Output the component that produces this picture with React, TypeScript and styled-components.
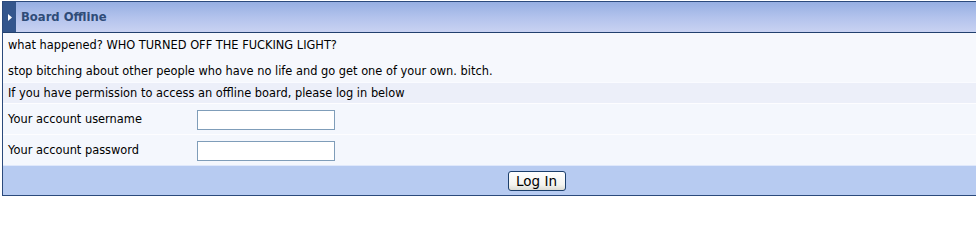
import React from 'react';
import styled, { createGlobalStyle } from 'styled-components';

const GlobalStyle = createGlobalStyle`
  html, body {
    margin: 0;
    padding: 0;
    background: #ffffff;
    overflow: hidden;
  }
  body {
    padding: 1px 0 0 2px;
    font-family: 'DejaVu Sans', Verdana, sans-serif;
  }
`;

const Board = styled.div`
  width: 1067px;
  border: 1px solid #2b4a7c;
  border-right: none;
`;

const Header = styled.div`
  display: flex;
  align-items: stretch;
  height: 30px;
  background: linear-gradient(to bottom, #96afe2 0%, #b2c2ec 50%, #c9d2f2 100%);
  border-bottom: 1px solid #22406e;
`;

const Marker = styled.div`
  width: 13px;
  background: #34568c;
  display: flex;
  align-items: center;
  justify-content: center;
`;

const Title = styled.h2`
  margin: 0;
  padding-left: 5px;
  display: flex;
  align-items: center;
  font-size: 11.6px;
  font-weight: bold;
  color: #2f4c78;
`;

const Message = styled.div`
  padding: 6px 5px 4px 5px;
  background: #f6f8fd;
  font-size: 11.4px;
  line-height: 13px;
  color: #000;
`;

const Line = styled.p<{ $gap?: boolean }>`
  margin: ${p => (p.$gap ? '13px 0 0' : '0')};
`;

const Notice = styled.div`
  height: 20px;
  padding: 0 5px;
  display: flex;
  align-items: center;
  background: #eceff9;
  border-top: 1px solid #fafbff;
  font-size: 11.4px;
  color: #000;
`;

const FieldRow = styled.div`
  display: grid;
  grid-template-columns: 194px 1fr;
  align-items: center;
  height: 30px;
  background: #f4f7fd;
  border-top: 1px solid #fdfdff;
`;

const Label = styled.label`
  padding-left: 5px;
  font-size: 11.4px;
  color: #000;
`;

const Field = styled.input`
  box-sizing: border-box;
  width: 138px;
  height: 20px;
  border: 1px solid #7f9db9;
  background: #fff;
  padding: 1px 3px;
  font-size: 11px;
  font-family: 'DejaVu Sans', Verdana, sans-serif;
`;

const Footer = styled.div`
  height: 29px;
  display: flex;
  align-items: center;
  justify-content: center;
  background: #b7cbf1;
  border-top: 1px solid #dfe8fb;
`;

const Button = styled.button`
  box-sizing: border-box;
  width: 58px;
  height: 20px;
  border: 1px solid #1c3f6c;
  border-radius: 3px;
  background: linear-gradient(to bottom, #ffffff 0%, #f4f4f0 70%, #dcdcd4 100%);
  font-family: 'DejaVu Sans', Tahoma, sans-serif;
  font-size: 13.5px;
  color: #000;
  padding: 0;
`;

export default function App() {
  return (
    <>
      <GlobalStyle />
      <Board>
        <Header>
          <Marker>
            <svg width="4" height="7" viewBox="0 0 4 7">
              <path d="M0 0 L4 3.5 L0 7 Z" fill="#ffffff" />
            </svg>
          </Marker>
          <Title>Board Offline</Title>
        </Header>
        <Message>
          <Line>what happened? WHO TURNED OFF THE FUCKING LIGHT?</Line>
          <Line $gap>stop bitching about other people who have no life and go get one of your own. bitch.</Line>
        </Message>
        <Notice>If you have permission to access an offline board, please log in below</Notice>
        <FieldRow>
          <Label>Your account username</Label>
          <div>
            <Field type="text" />
          </div>
        </FieldRow>
        <FieldRow>
          <Label>Your account password</Label>
          <div>
            <Field type="password" />
          </div>
        </FieldRow>
        <Footer>
          <Button>Log In</Button>
        </Footer>
      </Board>
    </>
  );
}
